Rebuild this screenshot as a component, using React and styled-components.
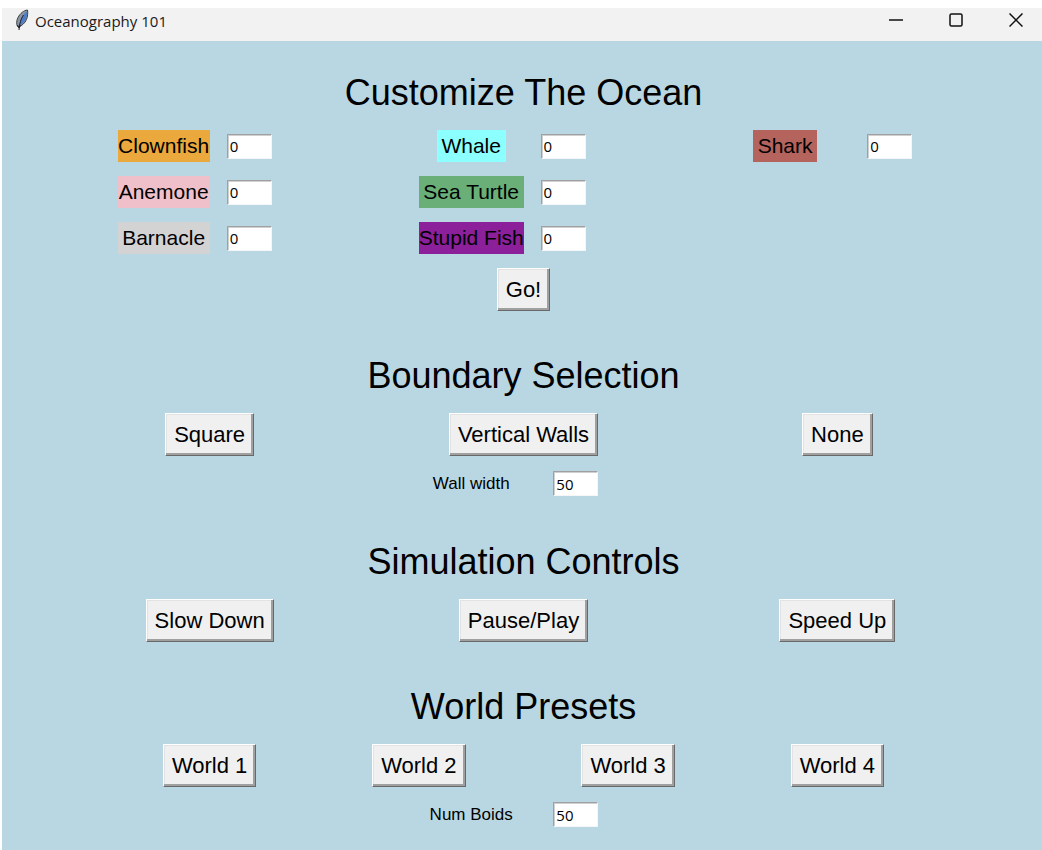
import { useState } from "react";
import styled, { createGlobalStyle } from "styled-components";

const species = [
    { name: "Clownfish", color: "#eba83c", width: 92, column: 1, row: 1, align: "end" },
    { name: "Anemone", color: "#f0c0ca", width: 92, column: 1, row: 2, align: "end" },
    { name: "Barnacle", color: "#d3d3d3", width: 92, column: 1, row: 3, align: "end" },
    { name: "Whale", color: "#8cffff", width: 69, column: 4, row: 1 },
    { name: "Sea Turtle", color: "#6aaf78", width: 105, column: 4, row: 2 },
    { name: "Stupid Fish", color: "#8c1f9a", width: 105, column: 4, row: 3 },
    { name: "Shark", color: "#b5635d", width: 64, column: 7, row: 1, entryAlign: "center" },
];

const worlds = ["World 1", "World 2", "World 3", "World 4"];

function NumberField({ id, initial, column, row, align }) {
    const [value, setValue] = useState(initial);

    return (
        <Entry
            id={id}
            type="text"
            inputMode="numeric"
            value={value}
            onChange={(e) => setValue(e.target.value)}
            $column={column}
            $row={row}
            $align={align}
        />
    );
}

function FeatherIcon() {
    return (
        <Feather viewBox="0 0 14 22" aria-hidden="true">
            <path
                d="M12.500 1C9 1.300 5 4.500 3 8.500c-1.500 3-1.800 6.500-.5 9L4 18c3-1.500 6-4 7.500-7.500 1.200-3 1.500-6.500 1-9.500z"
                fill="#8d95a1"
                stroke="#3c4046"
                strokeWidth="1"
            />
            <path d="M12 2.500C8.500 5 5.500 9.500 4.500 16.500 8 14.500 10.500 12 11.500 8.500c.5-2 .7-4 .5-6z" fill="#4c7cc9" />
            <path d="M8.500 6C6 10 4.500 14 4 21" fill="none" stroke="#1b1d22" strokeWidth="1" />
            <path d="M2.500 16l1.500 3 1.500-3" fill="none" stroke="#1b1d22" strokeWidth="1" />
        </Feather>
    );
}

export default function App() {
    return (
        <Page>
            <GlobalStyle />
            <TitleBar>
                <FeatherIcon />
                <WindowTitle>Oceanography 101</WindowTitle>
                <WindowButton aria-label="Minimize">
                    <svg width="14" height="14" viewBox="0 0 14 14">
                        <path d="M0 7h14" />
                    </svg>
                </WindowButton>
                <WindowButton aria-label="Maximize">
                    <svg width="14" height="14" viewBox="0 0 14 14">
                        <rect x="1" y="1" width="12" height="12" rx="1.500" />
                    </svg>
                </WindowButton>
                <WindowButton aria-label="Close">
                    <svg width="14" height="14" viewBox="0 0 14 14">
                        <path d="M.5 .5l13 13M13.500 .5L.5 13.500" />
                    </svg>
                </WindowButton>
            </TitleBar>
            <Panel>
                <Section>
                    <Heading>Customize The Ocean</Heading>
                    {species.map((s) => (
                        <SpeciesLabel
                            key={s.name}
                            htmlFor={s.name}
                            $color={s.color}
                            $width={s.width}
                            $column={s.column}
                            $row={s.row + 1}
                            $align={s.align}
                        >
                            {s.name}
                        </SpeciesLabel>
                    ))}
                    {species.map((s) => (
                        <NumberField
                            key={s.name}
                            id={s.name}
                            initial="0"
                            column={s.column + 1}
                            row={s.row + 1}
                            align={s.entryAlign}
                        />
                    ))}
                    <Button $column={4}>Go!</Button>
                </Section>

                <Section>
                    <Heading>Boundary Selection</Heading>
                    <Button $column={1}>Square</Button>
                    <Button $column={4}>Vertical Walls</Button>
                    <Button $column={7}>None</Button>
                    <FieldLabel htmlFor="wall-width">Wall width</FieldLabel>
                    <NumberField id="wall-width" initial="50" column={5} align="center" />
                </Section>

                <Section>
                    <Heading>Simulation Controls</Heading>
                    <Button $column={1}>Slow Down</Button>
                    <Button $column={4}>Pause/Play</Button>
                    <Button $column={7}>Speed Up</Button>
                </Section>

                <Section>
                    <Heading>World Presets</Heading>
                    {worlds.map((world, i) => (
                        <Button key={world} $column={i * 2 + 1}>
                            {world}
                        </Button>
                    ))}
                    <FieldLabel htmlFor="num-boids">Num Boids</FieldLabel>
                    <NumberField id="num-boids" initial="50" column={5} align="center" />
                </Section>
            </Panel>
        </Page>
    );
}

const GlobalStyle = createGlobalStyle`
    * {
        box-sizing: border-box;
    }
    body {
        margin: 0;
        background: #fff;
        color: #000;
        font-family: "Liberation Sans", Arial, sans-serif;
    }
`;
const Page = styled.div`
    min-height: 100vh;
    padding: 8px 0 0 2px;
    display: flex;
    flex-direction: column;
`;
const TitleBar = styled.header`
    height: 33px;
    padding: 0 0 9px 13px;
    display: flex;
    align-items: center;
    background: #f2f2f2;
`;
const Feather = styled.svg`
    width: 14px;
    height: 22px;
`;
const WindowTitle = styled.span`
    flex: 1;
    margin: 1px 0 0 6px;
    color: #1a1a1a;
    font-family: "Open Sans", sans-serif;
    font-size: 15px;
    line-height: 20px;
`;
const WindowButton = styled.button`
    width: 60px;
    height: 24px;
    padding: 0 0 0 8px;
    display: flex;
    align-items: center;
    justify-content: center;
    border: none;
    background: none;

    svg {
        fill: none;
        stroke: #111;
        stroke-width: 1.5;
    }
`;
const Panel = styled.main`
    flex: 1;
    padding: 31px 100px 20px 103px;
    display: flex;
    flex-direction: column;
    gap: 44px;
    background: #b9d7e2;
`;
const Section = styled.section`
    display: grid;
    grid-template-columns: repeat(8, minmax(0, 1fr));
    row-gap: 14px;
    align-items: center;
`;
const Heading = styled.h1`
    grid-column: 1 / -1;
    margin: 0 0 2px;
    font-size: 36px;
    font-weight: 400;
    line-height: 42px;
    text-align: center;
`;
const SpeciesLabel = styled.label`
    grid-column: ${(p) => p.$column};
    grid-row: ${(p) => p.$row};
    justify-self: ${(p) => p.$align || "center"};
    width: ${(p) => p.$width}px;
    overflow: hidden;
    background: ${(p) => p.$color};
    font-size: 21px;
    line-height: 32px;
    text-align: center;
    white-space: nowrap;
`;
const Entry = styled.input`
    grid-column: ${(p) => p.$column};
    grid-row: ${(p) => p.$row || "auto"};
    justify-self: ${(p) => p.$align || "start"};
    width: 45px;
    height: 25px;
    margin: 0 ${(p) => (p.$align ? 0 : 17)}px;
    padding: 0 2px;
    border: 1px solid #f4f6f7;
    border-top-color: #a0a0a0;
    border-left-color: #a0a0a0;
    border-radius: 0;
    box-shadow: inset 1px 1px #d0d0d0;
    outline: none;
    background: #fff;
    font-family: "Open Sans", sans-serif;
    font-size: 15px;
`;
const Button = styled.button`
    grid-column: ${(p) => p.$column} / span 2;
    justify-self: center;
    height: 43px;
    padding: 0 8px;
    border: 1px solid;
    border-color: #fff #696969 #696969 #fff;
    border-radius: 0;
    box-shadow: inset -2px -2px #a0a0a0, inset 1px 1px #e3e3e3;
    background: #f0f0f0;
    color: #000;
    font-family: inherit;
    font-size: 22px;
    white-space: nowrap;
`;
const FieldLabel = styled.label`
    grid-column: 4;
    justify-self: center;
    font-size: 17px;
    line-height: 27px;
    white-space: nowrap;
`;
